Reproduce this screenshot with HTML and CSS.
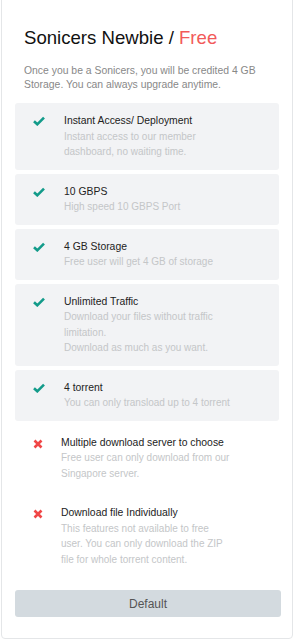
FILE: index.html
```html
<!DOCTYPE html>
<html lang="en">
<head>
  <meta charset="UTF-8" />
  <meta name="viewport" content="width=device-width, initial-scale=1.0"/>
  <title>Sonicers Newbie</title>
  <link rel="stylesheet" href="styles.css">
</head>
<body>
  <div class="plan-card">
    <div class="plan-head">
      <h2>Sonicers Newbie / <span class="price">Free</span></h2>
      <p>Once you be a Sonicers, you will be credited 4 GB Storage. You can always upgrade anytime.</p>
    </div>

    <ul class="features">
      <li class="feature yes">
        <span class="icon"><svg viewBox="0 0 12 10" width="12" height="10"><path d="M1 5.2 4.3 8.3 11 1.6" fill="none" stroke="currentColor" stroke-width="2.6"/></svg></span>
        <div class="text">
          <strong>Instant Access/ Deployment</strong>
          <span>Instant access to our member dashboard, no waiting time.</span>
        </div>
      </li>
      <li class="feature yes">
        <span class="icon"><svg viewBox="0 0 12 10" width="12" height="10"><path d="M1 5.2 4.3 8.3 11 1.6" fill="none" stroke="currentColor" stroke-width="2.6"/></svg></span>
        <div class="text">
          <strong>10 GBPS</strong>
          <span>High speed 10 GBPS Port</span>
        </div>
      </li>
      <li class="feature yes">
        <span class="icon"><svg viewBox="0 0 12 10" width="12" height="10"><path d="M1 5.2 4.3 8.3 11 1.6" fill="none" stroke="currentColor" stroke-width="2.6"/></svg></span>
        <div class="text">
          <strong>4 GB Storage</strong>
          <span>Free user will get 4 GB of storage</span>
        </div>
      </li>
      <li class="feature yes">
        <span class="icon"><svg viewBox="0 0 12 10" width="12" height="10"><path d="M1 5.2 4.3 8.3 11 1.6" fill="none" stroke="currentColor" stroke-width="2.6"/></svg></span>
        <div class="text">
          <strong>Unlimited Traffic</strong>
          <span>Download your files without traffic limitation.</span>
          <span>Download as much as you want.</span>
        </div>
      </li>
      <li class="feature yes">
        <span class="icon"><svg viewBox="0 0 12 10" width="12" height="10"><path d="M1 5.2 4.3 8.3 11 1.6" fill="none" stroke="currentColor" stroke-width="2.6"/></svg></span>
        <div class="text">
          <strong>4 torrent</strong>
          <span>You can only transload up to 4 torrent</span>
        </div>
      </li>
      <li class="feature no">
        <span class="icon"><svg viewBox="0 0 10 10" width="10" height="10"><path d="M1.5 1.5 8.5 8.5M8.5 1.5 1.5 8.5" fill="none" stroke="currentColor" stroke-width="2.6"/></svg></span>
        <div class="text">
          <strong>Multiple download server to choose</strong>
          <span>Free user can only download from our Singapore server.</span>
        </div>
      </li>
      <li class="feature no">
        <span class="icon"><svg viewBox="0 0 10 10" width="10" height="10"><path d="M1.5 1.5 8.5 8.5M8.5 1.5 1.5 8.5" fill="none" stroke="currentColor" stroke-width="2.6"/></svg></span>
        <div class="text">
          <strong>Download file Individually</strong>
          <span>This features not available to free user. You can only download the ZIP file for whole torrent content.</span>
        </div>
      </li>
    </ul>

    <button type="button" class="plan-btn">Default</button>
  </div>
</body>
</html>
```

FILE: styles.css
```css
body {
  margin: 0;
  padding: 0;
  background-color: #fff;
  font-family: 'Liberation Sans', Arial, sans-serif;
  color: #333;
}

.plan-card {
  margin: -4px 1px 0 1px;
  height: 643px;
  box-sizing: border-box;
  border: 1px solid #e4e6e8;
  border-radius: 4px;
  padding: 0 11px 0 13px;
}

.plan-head {
  padding: 29px 9px 0 9px;
}

.plan-head h2 {
  margin: 0;
  font-size: 18.6px;
  font-weight: normal;
  color: #111;
  line-height: 24px;
}

.price {
  color: #f25a5a;
}

.plan-head p {
  margin: 14px 0 11px 0;
  font-size: 10.4px;
  line-height: 14px;
  color: #888;
}

.features {
  list-style: none;
  margin: 0 2px 0 0;
  padding: 0;
  display: flex;
  flex-direction: column;
  gap: 4px;
}

.feature {
  display: flex;
  align-items: flex-start;
  padding: 10px 0;
  border-radius: 3px;
  font-size: 10.4px;
  line-height: 15.5px;
}

.feature.yes {
  background-color: #f2f3f5;
}

.feature .icon {
  width: 50px;
  display: flex;
  justify-content: center;
  padding-top: 3px;
  margin-left: -1px;
}

.feature.yes .icon {
  color: #139b8a;
}

.feature.no .icon {
  color: #f04646;
  width: 47px;
  padding-top: 4px;
}

.feature .text {
  width: 169px;
  display: flex;
  flex-direction: column;
}

.feature .text strong {
  font-weight: normal;
  color: #222;
}

.feature .text span {
  font-size: 10px;
  color: #c4c6c8;
}

.plan-btn {
  display: block;
  width: 100%;
  margin-top: 13px;
  height: 27px;
  border: none;
  border-radius: 3px;
  background-color: #d3dadf;
  color: #555;
  font-family: 'Liberation Sans', Arial, sans-serif;
  font-size: 12px;
  cursor: pointer;
}
```
